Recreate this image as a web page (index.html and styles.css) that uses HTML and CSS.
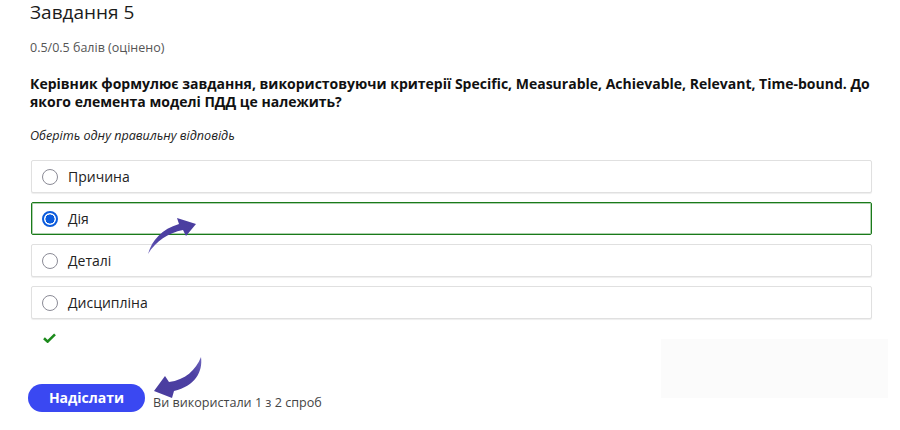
FILE: index.html
```html
<!DOCTYPE html>
<html lang="uk">
<head>
<meta charset="utf-8">
<title>Завдання 5</title>
<link rel="stylesheet" href="styles.css">
</head>
<body>
<main class="page">
  <h1 class="title">Завдання 5</h1>
  <p class="score">0.5/0.5 балів (оцінено)</p>
  <p class="question">Керівник формулює завдання, використовуючи критерії Specific, Measurable, Achievable, Relevant, Time-bound. До якого елемента моделі ПДД це належить?</p>
  <p class="hint">Оберіть одну правильну відповідь</p>
  <ul class="options">
    <li class="option"><span class="radio"></span><span class="label">Причина</span></li>
    <li class="option option-selected"><span class="radio radio-on"></span><span class="label">Дія</span></li>
    <li class="option"><span class="radio"></span><span class="label">Деталі</span></li>
    <li class="option"><span class="radio"></span><span class="label">Дисципліна</span></li>
  </ul>
  <div class="result">
    <svg class="check" width="13" height="10" viewBox="0 0 13 10"><path d="M1 5.2 L4.6 8.6 L12 1.4" fill="none" stroke="#1c8a1c" stroke-width="2.6" stroke-linejoin="miter"/></svg>
  </div>
  <div class="actions">
    <button class="submit" type="button">Надіслати</button>
    <span class="attempts">Ви використали 1 з 2 спроб</span>
  </div>
  <div class="ghost"></div>
  <svg class="arrows" width="900" height="430" viewBox="0 0 900 430">
    <defs>
      <linearGradient id="g1" x1="148" y1="254" x2="196" y2="222" gradientUnits="userSpaceOnUse">
        <stop offset="0" stop-color="#6b60bb"/>
        <stop offset="0.3" stop-color="#4d40a3"/>
        <stop offset="1" stop-color="#4a3d9f"/>
      </linearGradient>
      <linearGradient id="g2" x1="202" y1="356" x2="154" y2="392" gradientUnits="userSpaceOnUse">
        <stop offset="0" stop-color="#7168bf"/>
        <stop offset="0.3" stop-color="#4d40a3"/>
        <stop offset="1" stop-color="#4a3d9f"/>
      </linearGradient>
    </defs>
    <path d="M148,254 C152,240 162,229 179,224 L177,218 L196,224 L186,236 L183,230 C168,233 156,241 148,254 Z" fill="url(#g1)"/>
    <path d="M201,357 C203,372 195,386 174,391 L172,398 L154,391 L165,376 L169,382 C185,380 196,370 201,357 Z" fill="url(#g2)"/>
  </svg>
</main>
</body>
</html>
```

FILE: styles.css
```css
html, body {
  margin: 0;
  padding: 0;
  background: #ffffff;
}

body {
  font-family: "Open Sans", "Liberation Sans", Arial, sans-serif;
  color: #222222;
}

.page {
  position: relative;
  width: 900px;
  height: 430px;
  box-sizing: border-box;
  padding: 0 28px 0 30px;
  overflow: hidden;
}

.title {
  margin: 0;
  font-size: 19px;
  line-height: 24px;
  font-weight: normal;
  color: #1b1b1b;
}

.score {
  margin: 16px 0 0;
  font-size: 12.5px;
  line-height: 16px;
  color: #555555;
}

.question {
  margin: 19px 0 0;
  font-size: 14px;
  line-height: 18px;
  font-weight: bold;
  color: #111111;
}

.hint {
  margin: 17px 0 0;
  font-size: 12.6px;
  line-height: 16px;
  font-style: italic;
  color: #222222;
}

.options {
  list-style: none;
  margin: 16px 0 0;
  padding: 0 0 0 1px;
  display: flex;
  flex-direction: column;
  gap: 9px;
}

.option {
  height: 33px;
  box-sizing: border-box;
  display: flex;
  align-items: center;
  gap: 10px;
  padding: 0 10px;
  border: 1px solid #e0e0e0;
  border-radius: 2px;
  box-shadow: 0 1px 1px rgba(0, 0, 0, 0.07);
  background: #ffffff;
}

.option-selected {
  border-color: #1a7a1a;
  box-shadow: inset 0 0 0 1px rgba(26, 122, 26, 0.35);
}

.radio {
  width: 16px;
  height: 16px;
  box-sizing: border-box;
  border: 1.5px solid #8b8b96;
  border-radius: 50%;
  flex: none;
  background: #ffffff;
}

.radio-on {
  border: 2px solid #0b5bdc;
  background: radial-gradient(circle, #0b5bdc 0 4.3px, #ffffff 4.8px);
}

.label {
  font-size: 14px;
  line-height: 18px;
  color: #222222;
}

.result {
  margin: 14px 0 0 13px;
  height: 10px;
}

.check {
  display: block;
}

.actions {
  margin-top: 41px;
  margin-left: -2px;
  display: flex;
  align-items: flex-end;
  gap: 8px;
}

.submit {
  width: 117px;
  height: 28px;
  border: none;
  border-radius: 14px;
  background: #3a48f2;
  color: #ffffff;
  font-family: "Open Sans", "Liberation Sans", Arial, sans-serif;
  font-size: 14px;
  font-weight: bold;
  padding: 0;
  line-height: 28px;
}

.attempts {
  font-size: 12.6px;
  line-height: 14px;
  color: #444444;
  padding-bottom: 2px;
}

.ghost {
  position: absolute;
  left: 661px;
  top: 339px;
  width: 227px;
  height: 59px;
  background: #fbfbfb;
}

.arrows {
  position: absolute;
  left: 0;
  top: 0;
  pointer-events: none;
}
```
